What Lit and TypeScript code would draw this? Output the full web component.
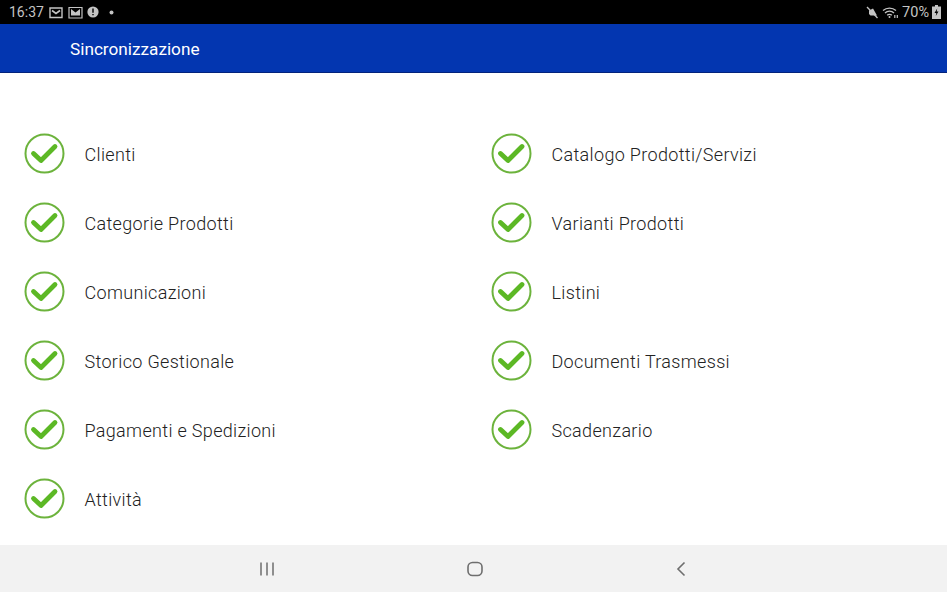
import { LitElement, html, css } from "lit";
import { customElement } from "lit/decorators.js";

const left = ["Clienti", "Categorie Prodotti", "Comunicazioni", "Storico Gestionale", "Pagamenti e Spedizioni", "Attività"];
const right = ["Catalogo Prodotti/Servizi", "Varianti Prodotti", "Listini", "Documenti Trasmessi", "Scadenzario"];

@customElement("app-root")
export class AppRoot extends LitElement {
  static styles = css`
    :host { display: flex; flex-direction: column; width: 947px; height: 592px; overflow: hidden; background: #fff; font-family: Roboto, "Liberation Sans", sans-serif; }
    .status { height: 24px; background: #000; color: #c4c4c4; display: flex; align-items: center; justify-content: space-between; padding: 0 6px 0 9px; font-size: 14px; flex: none; }
    .group { display: flex; align-items: center; }
    .time { margin-right: 5px; }
    .status svg { display: block; }
    .mail2 { margin-left: 5px; }
    .alert { margin-left: 4px; }
    .dot { margin-left: 10px; }
    .wifi { margin-left: 3px; }
    .pct { font-size: 14.5px; margin-left: 3px; margin-right: 3px; }
    .bar { height: 49px; flex: none; background: #0336b0; border-bottom: 1px solid #02237c; box-sizing: border-box; color: #fff; display: flex; align-items: center; padding: 1px 0 0 70px; font-size: 17.2px; }
    .content { flex: 1; display: grid; grid-template-columns: 467px 1fr; padding: 46px 0 0 24px; }
    .col { display: flex; flex-direction: column; }
    .row { height: 69px; display: flex; align-items: center; gap: 19.5px; color: #222; font-size: 18px; font-weight: 300; letter-spacing: 0.33px; }
    .label { padding-top: 1px; }
    .nav { height: 47px; flex: none; background: #f2f2f2; }
    .nav svg { display: block; }
    .navitems { display: flex; align-items: center; padding-left: 259px; height: 100%; }
    .n2 { margin-left: 192px; }
    .n3 { margin-left: 193px; }
  `;

  check() {
    return html`<svg width="41" height="41" viewBox="0 0 41 41" fill="none">
      <circle cx="20.5" cy="20.5" r="19" stroke="#6cb33c" stroke-width="2"/>
      <path d="M9.5 20.5 L17 27.5 L31 13.5" stroke="#5cb825" stroke-width="4.8" stroke-linecap="round" stroke-linejoin="round"/>
    </svg>`;
  }

  row(t: string) {
    return html`<div class="row">${this.check()}<span class="label">${t}</span></div>`;
  }

  render() {
    return html`
      <div class="status">
        <div class="group">
          <span class="time">16:37</span>
          <svg width="14" height="13" viewBox="0 0 14 13" fill="none" stroke="#c4c4c4" stroke-width="1.4"><path d="M1 2h12v9.5H1z"/><path d="M3 4.5l4 3 4-3" stroke-width="1.6"/></svg>
          <svg class="mail2" width="15" height="13" viewBox="0 0 15 13" fill="#c4c4c4"><path d="M1 1.5h13v10.5H1z" fill="none" stroke="#c4c4c4" stroke-width="1.2"/><path d="M3 3l4.5 3.5L12 3v6.5H3z"/></svg>
          <svg class="alert" width="12" height="12" viewBox="0 0 12 12"><circle cx="6" cy="6" r="5.6" fill="#c4c4c4"/><path d="M5.3 2.6h1.4v4.2H5.3zM5.3 7.9h1.4v1.4H5.3z" fill="#000"/></svg>
          <svg class="dot" width="5" height="5" viewBox="0 0 5 5"><circle cx="2.5" cy="2.5" r="2" fill="#c4c4c4"/></svg>
        </div>
        <div class="group">
          <svg width="13" height="13" viewBox="0 0 13 13" fill="#c4c4c4"><path d="M3 4.5 L7 2.5 L11 9.5 H4.5 L3 8z"/><path d="M1 1L11.5 12" stroke="#c4c4c4" stroke-width="1.3"/></svg>
          <svg class="wifi" width="17" height="13" viewBox="0 0 17 13" fill="none" stroke="#c4c4c4" stroke-width="1.3"><path d="M1 4.5a10 10 0 0 1 13 0M3 7a6.5 6.5 0 0 1 9 0M5.2 9.3a3.2 3.2 0 0 1 4.6 0"/><circle cx="7.5" cy="11" r="1" fill="#c4c4c4" stroke="none"/><path d="M12.8 12V9M15.3 12V9" stroke-width="1.2"/></svg>
          <span class="pct">70%</span>
          <svg width="9" height="14" viewBox="0 0 9 14"><path d="M3 0h3v1.5h3V14H0V1.5h3z" fill="#c4c4c4"/><path d="M5.2 3.5L2.5 8h1.8l-.5 3 2.7-4.5H4.7z" fill="#000"/></svg>
        </div>
      </div>
      <div class="bar">Sincronizzazione</div>
      <div class="content">
        <div class="col">${left.map((t) => this.row(t))}</div>
        <div class="col">${right.map((t) => this.row(t))}</div>
      </div>
      <div class="nav">
        <div class="navitems">
          <svg width="16" height="16" viewBox="0 0 16 16" stroke="#6e6e6e" stroke-width="1.5"><path d="M2 1.5v13M8 1.5v13M14 1.5v13"/></svg>
          <svg class="n2" width="16" height="16" viewBox="0 0 16 16" fill="none" stroke="#6e6e6e" stroke-width="1.6"><rect x="1" y="1.5" width="14" height="13" rx="4.5"/></svg>
          <svg class="n3" width="10" height="16" viewBox="0 0 10 16" fill="none" stroke="#6e6e6e" stroke-width="1.6"><path d="M8.5 1.5L2 8l6.5 6.5"/></svg>
        </div>
      </div>
    `;
  }
}
